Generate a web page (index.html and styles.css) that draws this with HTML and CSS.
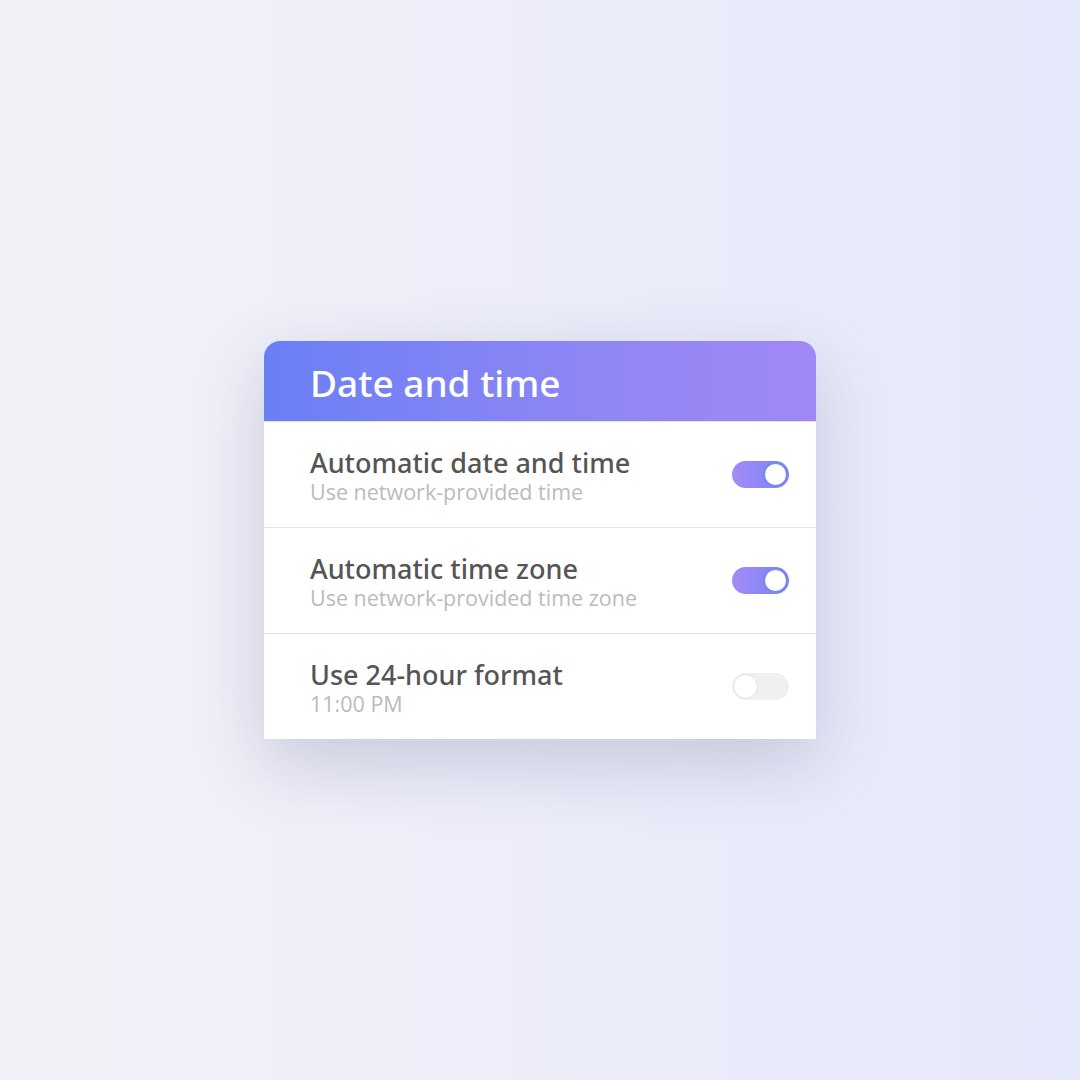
FILE: index.html
```html
<!DOCTYPE html>
<html>
<head>
<meta charset="utf-8">
<link rel="stylesheet" href="styles.css">
</head>
<body>
<div class="card">
  <div class="header">Date and time</div>
  <div class="row">
    <div class="text">
      <div class="title">Automatic date and time</div>
      <div class="sub">Use network-provided time</div>
    </div>
    <div class="toggle on"><span class="knob"></span></div>
  </div>
  <div class="row">
    <div class="text">
      <div class="title">Automatic time zone</div>
      <div class="sub">Use network-provided time zone</div>
    </div>
    <div class="toggle on"><span class="knob"></span></div>
  </div>
  <div class="row last">
    <div class="text">
      <div class="title">Use 24-hour format</div>
      <div class="sub">11:00 PM</div>
    </div>
    <div class="toggle off"><span class="knob"></span></div>
  </div>
</div>
</body>
</html>
```
FILE: styles.css
```css
html, body {
  margin: 0;
  padding: 0;
}
body {
  width: 1080px;
  height: 1080px;
  display: flex;
  align-items: center;
  justify-content: center;
  background: linear-gradient(90deg, #f1f2f7 0%, #e6e8fb 100%);
  font-family: "Open Sans", "Noto Sans", sans-serif;
}
.card {
  width: 552px;
  background: #fff;
  border-radius: 16px 16px 0 0;
  box-shadow: 0 24px 70px rgba(70, 70, 120, 0.22);
}
.header {
  height: 80px;
  box-sizing: border-box;
  padding: 3px 0 0 46px;
  display: flex;
  align-items: center;
  color: #fff;
  font-family: "Noto Sans", "Open Sans", sans-serif;
  font-size: 37px;
  font-weight: 500;
  border-radius: 16px 16px 0 0;
  background: linear-gradient(90deg, #6a7ff5 0%, #8f86f5 60%, #a088f5 100%);
}
.row {
  height: 106px;
  box-sizing: border-box;
  border-top: 1px solid #e3e3e3;
  padding: 0 27px 0 46px;
  display: flex;
  align-items: center;
  justify-content: space-between;
}
.text {
  padding-top: 4px;
}
.title {
  font-family: "Noto Sans", "Open Sans", sans-serif;
  font-size: 27px;
  font-weight: 500;
  color: #555;
  line-height: 30px;
}
.sub {
  font-size: 21.5px;
  color: #bbb;
  line-height: 28px;
}
.toggle {
  width: 57px;
  height: 27px;
  border-radius: 14px;
  box-sizing: border-box;
  display: flex;
  align-items: center;
  padding: 0 1px;
}
.toggle.on {
  background: linear-gradient(90deg, #a58af5 0%, #7586f6 100%);
  justify-content: flex-end;
}
.toggle.off {
  background: #f0f0f0;
  justify-content: flex-start;
}
.knob {
  width: 25px;
  height: 25px;
  border-radius: 50%;
  background: #fff;
  box-sizing: border-box;
}
.toggle.on .knob {
  border: 2px solid #7a86f5;
}
.toggle.off .knob {
  border: 1.5px solid #e2e2e2;
}
```
